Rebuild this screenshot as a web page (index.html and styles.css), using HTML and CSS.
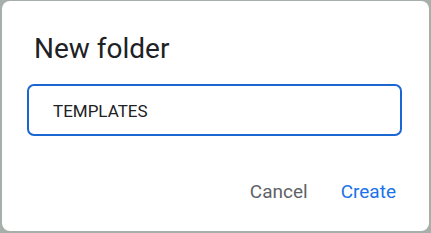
FILE: index.html
```html
<!DOCTYPE html>
<html lang="en">
<head>
    <meta charset="UTF-8">
    <meta name="viewport" content="width=device-width, initial-scale=1.0">
    <title>New folder</title>
    <link rel="stylesheet" href="styles.css">
</head>
<body>
    <div class="dialog">
        <h2 class="title">New folder</h2>
        <form class="form">
            <input type="text" class="name-input" value="TEMPLATES">
            <div class="actions">
                <button type="button" class="btn cancel">Cancel</button>
                <button type="submit" class="btn create">Create</button>
            </div>
        </form>
    </div>
</body>
</html>
```
FILE: styles.css
```css
body {
    margin: 0;
    background-color: #a7afab;
    font-family: Roboto, "Noto Sans", sans-serif;
    height: 233px;
    overflow: hidden;
}

.dialog {
    margin: 1px 2px 0 2px;
    height: 230px;
    box-sizing: border-box;
    background-color: #fff;
    border-radius: 8px;
    padding: 30px 27px 0 25px;
}

.title {
    margin: 0 0 0 7px;
    font-size: 28px;
    font-weight: 400;
    line-height: 36px;
    color: #202124;
}

.form {
    margin-top: 17px;
}

.name-input {
    display: block;
    width: 100%;
    height: 52px;
    box-sizing: border-box;
    padding: 2px 24px 0 24px;
    border: 2px solid #1a66d2;
    border-radius: 7px;
    font-family: Roboto, sans-serif;
    font-size: 17px;
    color: #202124;
    outline: none;
}

.actions {
    display: flex;
    justify-content: flex-end;
    gap: 21px;
    margin-top: 38px;
}

.btn {
    background: none;
    border: none;
    padding: 6px 6px;
    font-family: Roboto, sans-serif;
    font-size: 19px;
    cursor: pointer;
}

.cancel {
    color: #5f6368;
}

.create {
    color: #1a73e8;
}
```
